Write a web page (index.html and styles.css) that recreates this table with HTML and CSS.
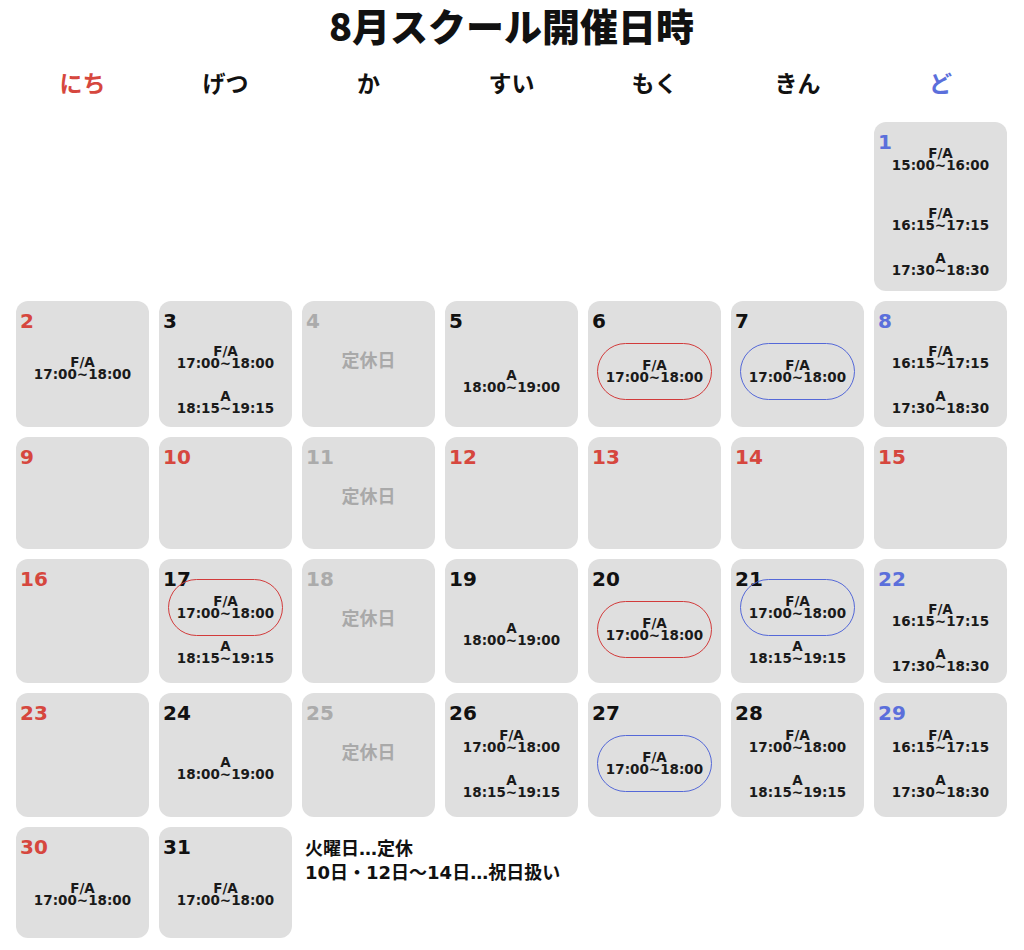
FILE: index.html
```html
<!DOCTYPE html>
<html lang="ja">
<head>
<meta charset="utf-8">
<title>8月スクール開催日時</title>
<link rel="stylesheet" href="styles.css">
</head>
<body>
<div class="page">
  <h1 class="title">8月スクール開催日時</h1>
  <div class="week">
    <div class="red">にち</div>
    <div>げつ</div>
    <div>か</div>
    <div>すい</div>
    <div>もく</div>
    <div>きん</div>
    <div class="blue">ど</div>
  </div>
  <div class="cal">
    <!-- row 1 -->
    <div class="cell first">
      <div class="num blue">1</div>
      <div class="body s3">
        <div class="e"><span class="l">F/A</span><span class="t">15:00~16:00</span></div>
        <div class="e"><span class="l">F/A</span><span class="t">16:15~17:15</span></div>
        <div class="e"><span class="l">A</span><span class="t">17:30~18:30</span></div>
      </div>
    </div>
    <!-- row 2 -->
    <div class="cell">
      <div class="num red">2</div>
      <div class="body one">
        <div class="e"><span class="l">F/A</span><span class="t">17:00~18:00</span></div>
      </div>
    </div>
    <div class="cell">
      <div class="num">3</div>
      <div class="body two">
        <div class="e"><span class="l">F/A</span><span class="t">17:00~18:00</span></div>
        <div class="e"><span class="l">A</span><span class="t">18:15~19:15</span></div>
      </div>
    </div>
    <div class="cell">
      <div class="num gray">4</div>
      <div class="body off">定休日</div>
    </div>
    <div class="cell">
      <div class="num">5</div>
      <div class="body one lowest">
        <div class="e"><span class="l">A</span><span class="t">18:00~19:00</span></div>
      </div>
    </div>
    <div class="cell">
      <div class="num">6</div>
      <div class="body ov1">
        <div class="oval o-red"><div class="e"><span class="l">F/A</span><span class="t">17:00~18:00</span></div></div>
      </div>
    </div>
    <div class="cell">
      <div class="num">7</div>
      <div class="body ov1">
        <div class="oval o-blue"><div class="e"><span class="l">F/A</span><span class="t">17:00~18:00</span></div></div>
      </div>
    </div>
    <div class="cell">
      <div class="num blue">8</div>
      <div class="body two">
        <div class="e"><span class="l">F/A</span><span class="t">16:15~17:15</span></div>
        <div class="e"><span class="l">A</span><span class="t">17:30~18:30</span></div>
      </div>
    </div>
    <!-- row 3 -->
    <div class="cell"><div class="num red">9</div></div>
    <div class="cell"><div class="num red">10</div></div>
    <div class="cell">
      <div class="num gray">11</div>
      <div class="body off">定休日</div>
    </div>
    <div class="cell"><div class="num red">12</div></div>
    <div class="cell"><div class="num red">13</div></div>
    <div class="cell"><div class="num red">14</div></div>
    <div class="cell"><div class="num red">15</div></div>
    <!-- row 4 -->
    <div class="cell"><div class="num red">16</div></div>
    <div class="cell">
      <div class="num">17</div>
      <div class="body ov2">
        <div class="oval o-red"><div class="e"><span class="l">F/A</span><span class="t">17:00~18:00</span></div></div>
        <div class="e"><span class="l">A</span><span class="t">18:15~19:15</span></div>
      </div>
    </div>
    <div class="cell">
      <div class="num gray">18</div>
      <div class="body off">定休日</div>
    </div>
    <div class="cell">
      <div class="num">19</div>
      <div class="body one low">
        <div class="e"><span class="l">A</span><span class="t">18:00~19:00</span></div>
      </div>
    </div>
    <div class="cell">
      <div class="num">20</div>
      <div class="body ov1">
        <div class="oval o-red"><div class="e"><span class="l">F/A</span><span class="t">17:00~18:00</span></div></div>
      </div>
    </div>
    <div class="cell">
      <div class="num">21</div>
      <div class="body ov2">
        <div class="oval o-blue"><div class="e"><span class="l">F/A</span><span class="t">17:00~18:00</span></div></div>
        <div class="e"><span class="l">A</span><span class="t">18:15~19:15</span></div>
      </div>
    </div>
    <div class="cell">
      <div class="num blue">22</div>
      <div class="body two">
        <div class="e"><span class="l">F/A</span><span class="t">16:15~17:15</span></div>
        <div class="e"><span class="l">A</span><span class="t">17:30~18:30</span></div>
      </div>
    </div>
    <!-- row 5 -->
    <div class="cell"><div class="num red">23</div></div>
    <div class="cell">
      <div class="num">24</div>
      <div class="body one low">
        <div class="e"><span class="l">A</span><span class="t">18:00~19:00</span></div>
      </div>
    </div>
    <div class="cell">
      <div class="num gray">25</div>
      <div class="body off">定休日</div>
    </div>
    <div class="cell">
      <div class="num">26</div>
      <div class="body two hi">
        <div class="e"><span class="l">F/A</span><span class="t">17:00~18:00</span></div>
        <div class="e"><span class="l">A</span><span class="t">18:15~19:15</span></div>
      </div>
    </div>
    <div class="cell">
      <div class="num">27</div>
      <div class="body ov1">
        <div class="oval o-blue"><div class="e"><span class="l">F/A</span><span class="t">17:00~18:00</span></div></div>
      </div>
    </div>
    <div class="cell">
      <div class="num">28</div>
      <div class="body two hi">
        <div class="e"><span class="l">F/A</span><span class="t">17:00~18:00</span></div>
        <div class="e"><span class="l">A</span><span class="t">18:15~19:15</span></div>
      </div>
    </div>
    <div class="cell">
      <div class="num blue">29</div>
      <div class="body two hi">
        <div class="e"><span class="l">F/A</span><span class="t">16:15~17:15</span></div>
        <div class="e"><span class="l">A</span><span class="t">17:30~18:30</span></div>
      </div>
    </div>
    <!-- row 6 -->
    <div class="cell">
      <div class="num red">30</div>
      <div class="body one">
        <div class="e"><span class="l">F/A</span><span class="t">17:00~18:00</span></div>
      </div>
    </div>
    <div class="cell">
      <div class="num">31</div>
      <div class="body one">
        <div class="e"><span class="l">F/A</span><span class="t">17:00~18:00</span></div>
      </div>
    </div>
    <div class="note">
      <div>火曜日…定休</div>
      <div>10日・12日～14日…祝日扱い</div>
    </div>
  </div>
</div>
</body>
</html>
```

FILE: styles.css
```css
body {
  margin: 0;
  background: #ffffff;
  color: #111111;
  font-family: "Noto Sans CJK JP", sans-serif;
}

.page {
  width: 991px;
  padding: 0 16px;
}

.title {
  margin: 0;
  height: 50px;
  line-height: 50px;
  font-size: 38px;
  font-weight: 900;
  text-align: center;
  color: #111111;
}

.week {
  display: grid;
  grid-template-columns: repeat(7, 133px);
  column-gap: 10px;
  margin-top: 17px;
  height: 30px;
  line-height: 30px;
  font-size: 23px;
  font-weight: 700;
  text-align: center;
}

.red { color: #d6473e; }
.blue { color: #5b6fdb; }
.gray { color: #ababab; }

.cal {
  display: grid;
  grid-template-columns: repeat(7, 133px);
  grid-template-rows: 169px 126px 112px 124px 124px 111px;
  gap: 10px;
  margin-top: 25px;
}

.cell {
  background: #dfdfdf;
  border-radius: 12px;
  display: grid;
  grid-template-columns: 100%;
  grid-template-rows: 100%;
}

.cell > * {
  grid-area: 1 / 1;
}

.first {
  grid-column: 7;
}

.num {
  align-self: start;
  justify-self: start;
  padding: 8px 0 0 4px;
  font-family: "DejaVu Sans", sans-serif;
  font-weight: 700;
  font-size: 20px;
  line-height: 24px;
}

.body {
  display: flex;
  flex-direction: column;
  align-items: center;
}

.e {
  display: flex;
  flex-direction: column;
  align-items: center;
  font-family: "DejaVu Sans", sans-serif;
  font-weight: 700;
  font-size: 13.5px;
  color: #1a1a1a;
}

.l {
  display: block;
  height: 11px;
  line-height: 11px;
}

.t {
  display: block;
  height: 13px;
  line-height: 13px;
}

.s3 { padding-top: 26px; }
.s3 .e:nth-child(2) { margin-top: 36px; }
.s3 .e:nth-child(3) { margin-top: 21px; }

.two { padding-top: 45px; }
.two.hi { padding-top: 37px; }
.two .e + .e { margin-top: 21px; }

.one { padding-top: 56px; }
.one.low { padding-top: 64px; }
.one.lowest { padding-top: 69px; }

.off {
  padding-top: 47px;
  font-size: 18px;
  line-height: 22px;
  font-weight: 700;
  color: #a9a9a9;
}

.ov1 { padding-top: 42px; }
.ov2 { padding-top: 20px; }
.ov2 .oval + .e { margin-top: 5px; }

.oval {
  box-sizing: border-box;
  width: 115px;
  height: 57px;
  border: 1.5px solid;
  border-radius: 29px;
  display: flex;
  justify-content: center;
  align-items: center;
}

.o-red { border-color: #d23b3b; }
.o-blue { border-color: #5468d8; }

.note {
  grid-column: 3 / 8;
  padding: 10px 0 0 3px;
  font-family: "DejaVu Sans", "Noto Sans CJK JP", sans-serif;
  font-weight: 700;
  font-size: 18px;
  line-height: 24px;
  color: #111111;
}
```
